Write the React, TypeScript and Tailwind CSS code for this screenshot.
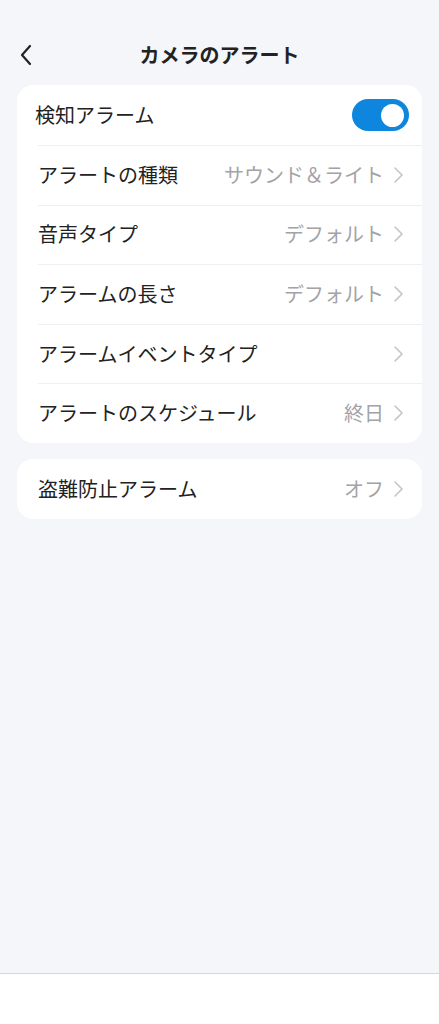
const font = { fontFamily: '"Noto Sans CJK JP", "Noto Sans", sans-serif' };

function Chevron() {
  return (
    <svg width="12" height="18" viewBox="0 0 12 18" className="ml-[8px] shrink-0">
      <path d="M3 2 L10 9 L3 16" fill="none" stroke="#c4c4c8" strokeWidth="1.6" strokeLinecap="round" strokeLinejoin="round" />
    </svg>
  );
}

type Row = { label: string; value?: string };

const rows: Row[] = [
  { label: "アラートの種類", value: "サウンド＆ライト" },
  { label: "音声タイプ", value: "デフォルト" },
  { label: "アラームの長さ", value: "デフォルト" },
  { label: "アラームイベントタイプ" },
  { label: "アラートのスケジュール", value: "終日" },
];

function SettingRow({ label, value, divider }: Row & { divider?: boolean }) {
  return (
    <div className="relative flex h-[59.6px] items-center pl-[21px] pr-[18px]">
      {divider && <div className="absolute left-[21px] right-0 top-0 h-px bg-[#eeeff2]" />}
      <span className="flex-1 text-[20px] text-[#222222]">{label}</span>
      {value && <span className="text-[20px] text-[#a3a3a7]">{value}</span>}
      <Chevron />
    </div>
  );
}

export default function App() {
  return (
    <div className="flex h-[1024px] w-[439px] flex-col bg-[#f5f6fa]" style={font}>
      {/* Header */}
      <div className="relative flex h-[85px] items-center justify-center pt-[24px]">
        <svg width="16" height="24" viewBox="0 0 16 24" className="absolute left-[18px] top-[43px]">
          <path d="M12 3 L4 12 L12 21" fill="none" stroke="#222222" strokeWidth="2.2" strokeLinecap="round" strokeLinejoin="round" />
        </svg>
        <span className="text-[20px] font-bold leading-[28px] text-[#222222]">カメラのアラート</span>
      </div>

      <div className="flex flex-col gap-[16px] px-[17px]">
        {/* Card 1 */}
        <div className="overflow-hidden rounded-[16px] bg-white">
          <div className="flex h-[60px] items-center pl-[18px] pr-[13px]">
            <span className="flex-1 text-[20px] text-[#222222]">検知アラーム</span>
            <div className="flex h-[32px] w-[57px] items-center justify-end rounded-full bg-[#0e86dd] pr-[5px]">
              <div className="h-[23px] w-[23px] rounded-full bg-white" />
            </div>
          </div>
          {rows.map((r) => (
            <SettingRow key={r.label} {...r} divider />
          ))}
        </div>

        {/* Card 2 */}
        <div className="overflow-hidden rounded-[16px] bg-white">
          <SettingRow label="盗難防止アラーム" value="オフ" />
        </div>
      </div>

      <div className="flex-1" />
      <div className="h-[51px] border-t border-[#d6d6da] bg-white" />
    </div>
  );
}
